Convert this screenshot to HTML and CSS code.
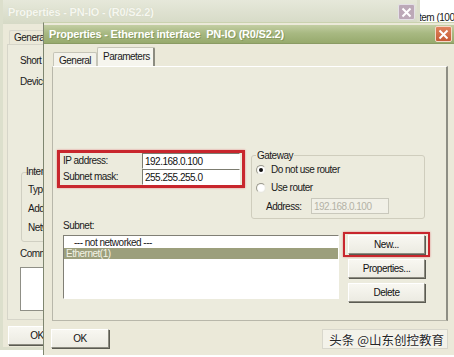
FILE: index.html
```html
<!DOCTYPE html>
<html lang="en">
<head>
    <meta charset="UTF-8">
    <title>Properties - Ethernet interface PN-IO</title>
    <link rel="stylesheet" href="styles.css">
</head>
<body>
    <div class="stray">tem (100</div>

    <div class="win back">
        <div class="titlebar">
            <span class="title">Properties - PN-IO - (R0/S2.2)</span>
            <span class="close"><svg width="11" height="11" viewBox="0 0 11 11"><path d="M1.5 1.5 9.5 9.5M9.5 1.5 1.5 9.5" stroke="#fff" stroke-width="2"/></svg></span>
        </div>
        <div class="win-body">
            <div class="tabs"><span class="tab sel">General</span></div>
            <div class="panel">
                <div class="line">Short Description:</div>
                <div class="line">Device ID:</div>
                <div class="group">
                    <div class="group-title">Interface</div>
                    <div class="line">Type:</div>
                    <div class="line">Address:</div>
                    <div class="line">Networked:</div>
                </div>
                <div class="line">Comment:</div>
                <div class="comment"></div>
            </div>
            <div class="foot"><button class="btn ok">OK</button></div>
        </div>
    </div>

    <div class="win front">
        <div class="titlebar">
            <span class="title">Properties - Ethernet interface&nbsp; PN-IO (R0/S2.2)</span>
            <span class="close"><svg width="11" height="11" viewBox="0 0 11 11"><path d="M1.5 1.5 9.5 9.5M9.5 1.5 1.5 9.5" stroke="#fff" stroke-width="2"/></svg></span>
        </div>
        <div class="win-body">
            <div class="tabs">
                <span class="tab">General</span>
                <span class="tab sel">Parameters</span>
            </div>
            <div class="panel">
                <div class="top-row">
                    <div class="ip-box">
                        <label for="ip">IP address:</label>
                        <input id="ip" class="field" value="192.168.0.100">
                        <label for="mask">Subnet mask:</label>
                        <input id="mask" class="field" value="255.255.255.0">
                    </div>
                    <fieldset class="gateway">
                        <legend>Gateway</legend>
                        <div class="radio-row"><span class="radio on"></span>Do not use router</div>
                        <div class="radio-row"><span class="radio"></span>Use router</div>
                        <div class="addr-row">
                            <span>Address:</span>
                            <input class="field off" value="192.168.0.100" disabled>
                        </div>
                    </fieldset>
                </div>
                <div class="subnet-row">
                    <div class="subnet">
                        <div class="subnet-label">Subnet:</div>
                        <ul class="listbox">
                            <li class="center">--- not networked ---</li>
                            <li class="picked">Ethernet(1)</li>
                        </ul>
                    </div>
                    <div class="buttons">
                        <div class="mark"><button class="btn">New...</button></div>
                        <button class="btn props">Properties...</button>
                        <button class="btn del">Delete</button>
                    </div>
                </div>
            </div>
            <div class="foot"><button class="btn ok">OK</button></div>
        </div>
    </div>

    <div class="watermark">头条 @山东创控教育</div>
</body>
</html>
```
FILE: styles.css
```css
* {
    box-sizing: border-box;
}
body {
    margin: 0;
    width: 454px;
    height: 357px;
    overflow: hidden;
    position: relative;
    background: #fff;
    font-family: "Liberation Sans", Arial, sans-serif;
    font-size: 10px;
    letter-spacing: -0.5px;
    color: #1a1a1a;
}
.stray {
    position: absolute;
    left: 419px;
    top: 12px;
    white-space: nowrap;
}

/* windows */
.win {
    position: absolute;
    display: flex;
    flex-direction: column;
    background: #ebe9d9;
}
.back {
    left: 0;
    top: 0;
    width: 420px;
    height: 350px;
    border: 3px solid #dcdfcc;
    border-top: 0;
}
.front {
    left: 43px;
    top: 22px;
    width: 420px;
    height: 333px;
    border-left: 1px solid #7f8670;
    border-top: 1px solid #c9d2ae;
}
.titlebar {
    display: flex;
    align-items: center;
    justify-content: space-between;
    padding: 0 4px 0 5px;
    flex: none;
}
.back .titlebar {
    height: 24px;
    background: linear-gradient(#e6e8da, #d6dac6);
}
.front .titlebar {
    height: 19px;
    margin-top: 2px;
    padding-left: 5px;
    padding-right: 11px;
    background: linear-gradient(#c3cea3, #a8b982 45%, #97aa6d);
    border-bottom: 1px solid #8a9b63;
}
.title {
    color: #fff;
    font-weight: bold;
    font-size: 11px;
    letter-spacing: -0.2px;
}
.back .title {
    color: #f6f7f0;
    text-shadow: 0 0 1px #c9cdb7;
}
.front .title {
    text-shadow: 1px 1px 0 #879a5d;
}
.close {
    width: 17px;
    height: 16px;
    display: flex;
    align-items: center;
    justify-content: center;
    border-radius: 2px;
}
.back .close {
    background: #bca9b8;
    border: 1px solid #e4e0e6;
    margin-right: -2px;
}
.front .close {
    background: linear-gradient(#e0835c, #c65b36);
    border: 1px solid #f4d9c8;
}
.win-body {
    flex: 1;
    display: flex;
    flex-direction: column;
    padding: 3px 7px 0 7px;
}
.back .win-body {
    padding: 4px 0 0 1px;
}

/* tabs */
.tabs {
    display: flex;
    align-items: flex-end;
    height: 20px;
    margin-left: 2px;
}
.tab {
    height: 15px;
    padding: 0 5px;
    display: flex;
    align-items: center;
    background: #f3f2ea;
    border: 1px solid #c6c5b8;
    border-bottom: 0;
    border-radius: 2px 2px 0 0;
}
.tab.sel {
    height: 20px;
    padding: 0 3px 3px 5px;
    background: #f6f5ee;
    border-right: 2px solid #8c8c80;
}
.back .tabs {
    height: 16px;
}
.back .tab {
    height: 14px;
    padding: 0 4px;
    margin-left: 3px;
    background: #ebe9d9;
    border-right: 0;
    border-color: #d9d8cc;
}
.panel {
    border: 1px solid #b8b7aa;
    border-top-color: #fff;
    border-right: 2px solid #8e8e84;
    background: #ecebdd;
}
.front .panel {
    width: 396px;
    height: 255px;
    margin-left: 1px;
    margin-top: -1px;
    padding: 83px 0 0 4px;
}
.back .panel {
    height: 276px;
    margin-left: 3px;
    padding: 10px 0 0 12px;
    border-color: #d6d5c9;
}
.back .line {
    height: 21px;
    line-height: 12px;
}
.group {
    margin: 75px 0 6px 1px;
    padding: 0 0 0 6px;
    border: 1px solid #d0cfc2;
    border-radius: 3px;
    height: 70px;
}
.group-title {
    margin: -7px 0 4px -3px;
    padding: 0 1px;
    height: 14px;
    line-height: 12px;
}
.group .line {
    height: 19px;
}
.comment {
    margin-top: -2px;
    width: 100px;
    height: 44px;
    background: #fff;
    border: 1px solid #8f8f86;
}
.foot {
    padding-top: 8px;
}
.back .foot {
    padding: 6px 0 0 4px;
}

/* buttons */
.btn {
    font: inherit;
    letter-spacing: inherit;
    color: #111;
    width: 77px;
    height: 19px;
    padding: 0;
    background: linear-gradient(#f8f7f1, #ecebe2);
    border: 1px solid #fff;
    border-right-color: #8c8b80;
    border-bottom-color: #8c8b80;
    box-shadow: 1px 1px 0 #5b5b52;
    display: block;
}
.ok {
    width: 58px;
}

/* ip fields */
.top-row {
    display: flex;
    align-items: flex-start;
}
.ip-box {
    width: 188px;
    height: 38px;
    border: 3px solid #c8262d;
    box-shadow: 0 0 2px #e3888a;
    padding: 0 2px 0 3px;
    display: grid;
    grid-template-columns: 79px 98px;
    align-items: center;
}
.ip-box label {
    line-height: 16px;
}
.field {
    font: inherit;
    letter-spacing: inherit;
    color: #111;
    height: 16px;
    padding: 0 2px;
    background: #fff;
    border: 1px solid #fff;
    border-top-color: #7c7c70;
    border-left-color: #7c7c70;
}
.gateway {
    margin: 0 0 0 6px;
    padding: 0 0 0 4px;
    width: 174px;
    height: 69px;
    border: 1px solid #cfcdbd;
    border-radius: 3px;
}
.gateway legend {
    padding: 0 1px;
    line-height: 11px;
}
.radio-row {
    display: flex;
    align-items: center;
    height: 19px;
    margin-top: -1px;
}
.radio {
    width: 10px;
    height: 10px;
    border-radius: 50%;
    margin-right: 5px;
    background: radial-gradient(#fff 50%, #e6e4da);
    border: 1px solid #9a998e;
    border-right-color: #e8e8e0;
    border-bottom-color: #e8e8e0;
    display: flex;
    align-items: center;
    justify-content: center;
}
.radio.on::after {
    content: "";
    width: 4px;
    height: 4px;
    border-radius: 50%;
    background: #111;
}
.addr-row {
    display: flex;
    align-items: center;
    margin: 1px 0 0 10px;
}
.addr-row span {
    width: 45px;
}
.field.off {
    width: 78px;
    height: 16px;
    color: #b4b2a6;
    background: #f1f0e7;
    border: 1px solid #c9c8bc;
}

/* subnet */
.subnet-row {
    display: flex;
    align-items: flex-start;
    margin-left: 6px;
}
.subnet {
    width: 276px;
}
.subnet-label {
    margin-top: 1px;
    line-height: 11px;
}
.listbox {
    list-style: none;
    margin: 4px 0 0 0;
    padding: 1px 0 0 0;
    height: 64px;
    background: #fff;
    border: 1px solid #fff;
    border-top-color: #807f75;
    border-left-color: #807f75;
}
.listbox li {
    height: 11px;
    line-height: 11px;
    padding-left: 2px;
}
.listbox .center {
    padding-left: 10px;
}
.listbox .picked {
    background: #9c9f7c;
    color: #f3f3e6;
}
.buttons {
    margin: 13px 0 0 4px;
}
.mark {
    border: 2px solid #c8262d;
    box-shadow: 0 0 2px #e3888a;
    padding: 1px 3px;
}
.props {
    margin: 2px 0 0 5px;
}
.del {
    margin: 5px 0 0 5px;
}

.watermark {
    position: absolute;
    left: 322px;
    top: 329px;
    width: 126px;
    height: 20px;
    display: flex;
    align-items: center;
    justify-content: flex-end;
    padding-right: 3px;
    background: rgba(250, 250, 246, 0.55);
    border: 1px solid #d8d7cc;
    font-family: "Noto Sans CJK SC", sans-serif;
    font-size: 12.5px;
    letter-spacing: 0;
    color: #262626;
    text-shadow: 0 0 2px #fff, 0 0 1px #fff;
}
```
